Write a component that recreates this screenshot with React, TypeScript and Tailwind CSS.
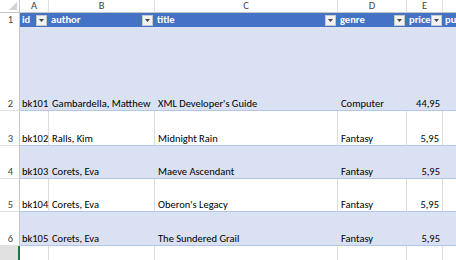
import React from "react";

const cols = [
  { key: "A", w: 29 },
  { key: "B", w: 106 },
  { key: "C", w: 183 },
  { key: "D", w: 69 },
  { key: "E", w: 36 },
  { key: "F", w: 60 },
];

const rows = [
  { n: 2, h: 84, id: "bk101", author: "Gambardella, Matthew", title: "XML Developer's Guide", genre: "Computer", price: "44,95", band: true },
  { n: 3, h: 35, id: "bk102", author: "Ralls, Kim", title: "Midnight Rain", genre: "Fantasy", price: "5,95", band: false },
  { n: 4, h: 33, id: "bk103", author: "Corets, Eva", title: "Maeve Ascendant", genre: "Fantasy", price: "5,95", band: true },
  { n: 5, h: 33, id: "bk104", author: "Corets, Eva", title: "Oberon's Legacy", genre: "Fantasy", price: "5,95", band: false },
  { n: 6, h: 34, id: "bk105", author: "Corets, Eva", title: "The Sundered Grail", genre: "Fantasy", price: "5,95", band: true },
];

const gridCols = "grid grid-cols-[20px_29px_106px_183px_69px_36px_60px]";

function Filter() {
  return (
    <div className="w-[11px] h-[11px] bg-[#f3f3f3] border border-[#c8c8c8] flex items-center justify-center shrink-0">
      <svg width="5" height="3" viewBox="0 0 5 3">
        <path d="M0 0 L5 0 L2.5 3 Z" fill="#444" />
      </svg>
    </div>
  );
}

function HeadCell({ label, right = true }: { label: string; right?: boolean }) {
  return (
    <div className="bg-[#4472c4] text-white flex items-center pl-[2px] pr-[2px] whitespace-nowrap leading-[14px]">
      <span className="flex-1 font-bold">{label}</span>
      {right && <Filter />}
    </div>
  );
}

export default function App() {
  return (
    <div
      className="w-[456px] h-[260px] overflow-hidden bg-white text-[10.5px] leading-[12px] text-black"
      style={{ fontFamily: "Carlito, 'Liberation Sans', Arial, sans-serif" }}
    >
      {/* column headers */}
      <div className={`${gridCols} h-[13px] border-b border-[#c6c6c6]`}>
        <div className="relative bg-white border-r border-[#c6c6c6]">
          <svg className="absolute right-[2px] bottom-[2px]" width="8" height="8" viewBox="0 0 8 8">
            <path d="M8 0 L8 8 L0 8 Z" fill="#d0d0d0" />
          </svg>
        </div>
        {cols.map((c) => (
          <div key={c.key} className="bg-white border-r border-[#e1e1e1] text-[#444] flex items-center justify-center">
            {c.key}
          </div>
        ))}
      </div>

      {/* row 1 header */}
      <div className={`${gridCols} h-[14px] overflow-hidden`}>
        <div className="bg-white border-r border-[#c6c6c6] text-[#444] flex items-center justify-end pr-[6px]">1</div>
        <HeadCell label="id" />
        <HeadCell label="author" />
        <HeadCell label="title" />
        <HeadCell label="genre" />
        <HeadCell label="price" />
        <HeadCell label="pu" right={false} />
      </div>

      {rows.map((r) => {
        const cell = r.band
          ? "bg-[#d9e1f2] border-b border-[#b4c6e7]"
          : "bg-white border-b border-[#b4c6e7] border-r border-r-[#dcdcdc]";
        return (
          <div key={r.n} className={gridCols} style={{ height: r.h }}>
            <div className="bg-white border-r border-[#c6c6c6] border-b border-b-[#e1e1e1] text-[#444] flex items-end justify-end pr-[6px]">
              {r.n}
            </div>
            <div className={`${cell} flex items-end pl-[2px] whitespace-nowrap`}>{r.id}</div>
            <div className={`${cell} flex items-end pl-[3px] whitespace-nowrap`}>{r.author}</div>
            <div className={`${cell} flex items-end pl-[3px] whitespace-nowrap`}>{r.title}</div>
            <div className={`${cell} flex items-end pl-[3px] whitespace-nowrap`}>{r.genre}</div>
            <div className={`${cell} flex items-end justify-end pr-[3px] whitespace-nowrap`}>{r.price}</div>
            <div className={`${cell}`}></div>
          </div>
        );
      })}

      {/* row 7 */}
      <div className={`${gridCols} h-[20px]`}>
        <div className="bg-[#e1e1e1] border-r-2 border-[#217346]"></div>
        <div className="bg-white border-r border-[#dcdcdc]"></div>
        <div className="bg-white border-r border-[#dcdcdc]"></div>
        <div className="bg-white border-r border-[#dcdcdc]"></div>
        <div className="bg-white border-r border-[#dcdcdc]"></div>
        <div className="bg-white border-r border-[#dcdcdc]"></div>
        <div className="bg-white"></div>
      </div>
    </div>
  );
}
